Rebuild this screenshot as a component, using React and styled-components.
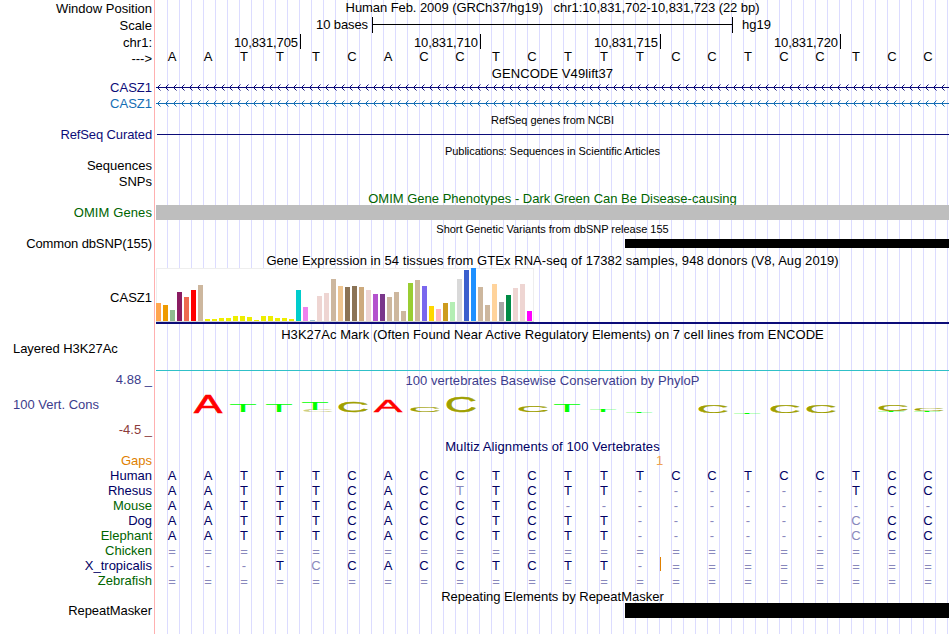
import React from "react";
import styled, { createGlobalStyle, css } from "styled-components";

const NAVY = "#0c0c78";
const GREEN = "#006400";
const PALE = "#8888bc";

const GlobalStyle = createGlobalStyle`
  body {
    margin: 0;
    background: #ffffff;
    color: #000000;
    font-family: "Liberation Sans", Arial, Helvetica, sans-serif;
    font-size: 13px;
    overflow: hidden;
  }
`;

const Browser = styled.div`
  display: flex;
  width: 950px;
  height: 634px;
  overflow: hidden;
`;

const LabelColumn = styled.div`
  display: flex;
  flex-direction: column;
  width: 154px;
  box-sizing: border-box;
  padding: 2px 2px 0 13px;
`;

const Label = styled.div`
  height: 14px;
  line-height: 14px;
  margin-top: ${(props) => props.$gap || 0}px;
  color: ${(props) => props.$color || "#000000"};
  letter-spacing: ${(props) => props.$spacing || 0}px;
  text-align: ${(props) => (props.$left ? "left" : "right")};
  white-space: pre;
`;

const TrackColumn = styled.div`
  display: flex;
  flex-direction: column;
  width: 793px;
  margin-right: 1px;
  margin-left: 1px;
  background: repeating-linear-gradient(
    to right,
    transparent 0 11px,
    #dcdcff 11px 12px
  );
`;

const Divider = styled.div`
  width: 1px;
  background: #ffb0b0;
`;

const Caption = styled.div`
  height: 14px;
  line-height: 16px;
  flex-shrink: 0;
  margin-top: ${(props) => props.$gap || 0}px;
  color: ${(props) => props.$color || "#000000"};
  letter-spacing: ${(props) => props.$spacing || 0}px;
  text-align: center;
  white-space: pre;
  ${(props) =>
    props.$small &&
    css`
      font-size: 11px;
      line-height: 14px;
    `}
`;

const ScaleRow = styled.div`
  display: flex;
  height: 16px;
  line-height: 16px;
  margin-top: 3px;
`;
const ScaleText = styled.div`
  width: 212px;
  margin-right: 4px;
  letter-spacing: -0.1px;
  text-align: right;
`;
const ScaleBar = styled.div`
  display: flex;
  align-items: center;
  box-sizing: border-box;
  width: 361px;
  margin-right: 9px;
  border: solid #000000;
  border-width: 0 1px;
  &::before {
    content: "";
    width: 100%;
    height: 1px;
    margin-bottom: 1px;
    background: #000000;
  }
`;

const RulerRow = styled.div`
  display: flex;
  height: 15px;
  line-height: 17px;
  margin-top: 1px;
`;
const RulerTick = styled.div`
  box-sizing: border-box;
  width: ${(props) => (props.$first ? 145 : 180)}px;
  padding-right: 2px;
  border-right: 1px solid #000000;
  letter-spacing: -0.1px;
  text-align: right;
`;

const BaseRow = styled.div`
  display: flex;
  height: 15px;
  line-height: 15px;
  margin-top: ${(props) => props.$gap || 0}px;
  color: ${(props) => props.$color || "#000000"};
`;
const Base = styled.span`
  flex: 0 0 36px;
  box-sizing: border-box;
  padding-right: 4px;
  text-align: center;
  position: relative;
  ${(props) =>
    props.$pale &&
    css`
      color: ${PALE};
    `}
  ${(props) =>
    props.$unaligned &&
    css`
      line-height: 17px;
    `}
`;
// insertion mark, lies between two bases
const Insertion = styled.i`
  position: absolute;
  left: 36px;
  top: -1px;
  width: 1px;
  height: 14px;
  background: #e08000;
`;

const GapRow = styled.div`
  height: 14px;
  line-height: 14px;
  margin-top: 1px;
  padding-left: 500px;
  color: #f0a050;
`;

const GeneLine = styled.svg`
  display: block;
  width: 793px;
  height: 15px;
  margin-top: ${(props) => props.$gap || 0}px;
`;

const Rule = styled.div`
  height: ${(props) => props.$h || 1}px;
  flex-shrink: 0;
  margin-top: ${(props) => props.$gap || 0}px;
  margin-left: ${(props) => props.$start || 0}px;
  background: ${(props) => props.$color || "#000000"};
`;

const Expression = styled.div`
  display: flex;
  align-items: flex-end;
  gap: 2px;
  box-sizing: border-box;
  width: 378px;
  height: 54px;
  margin-top: 1px;
  background: #ffffff;
  box-shadow: inset 1px 1px #eeeeee, inset -1px 0 #eeeeee;
  border-bottom: 1px solid #d3d3d3;
`;
const Bar = styled.div`
  width: 5px;
  flex-shrink: 0;
`;

const Logo = styled.svg`
  display: block;
  width: 793px;
  height: 50px;
`;

const labels = [
  { text: "Window Position", y: 8 },
  { text: "Scale", y: 25 },
  { text: "chr1:", y: 42 },
  { text: "--->", y: 58 },
  { text: "CASZ1", y: 87, color: NAVY },
  { text: "CASZ1", y: 103, color: "#146eb4" },
  { text: "RefSeq Curated", y: 134, color: NAVY, spacing: -0.12 },
  { text: "Sequences", y: 165 },
  { text: "SNPs", y: 181 },
  { text: "OMIM Genes", y: 212, color: GREEN, spacing: 0.1 },
  { text: "Common dbSNP(155)", y: 243, spacing: -0.12 },
  { text: "CASZ1", y: 297 },
  { text: "Layered H3K27Ac", y: 348, left: true, spacing: -0.05 },
  { text: "4.88 _", y: 379, color: "#3c3c8c" },
  { text: "100 Vert. Cons", y: 404, color: "#3c3c8c", left: true },
  { text: "-4.5 _", y: 429, color: "#8c3c3c" },
  { text: "Gaps", y: 460, color: "#e08000" },
  { text: "Human", y: 475, color: "#000064" },
  { text: "Rhesus", y: 490, color: "#000064" },
  { text: "Mouse", y: 505, color: GREEN },
  { text: "Dog", y: 520, color: "#000064" },
  { text: "Elephant", y: 535, color: GREEN },
  { text: "Chicken", y: 550, color: GREEN },
  { text: "X_tropicalis", y: 565, color: "#000064" },
  { text: "Zebrafish", y: 580, color: GREEN },
  { text: "RepeatMasker", y: 610, spacing: -0.06 },
];

// lower case = differs from human, drawn pale
const alignments = [
  "AATTTCACCTCTTTCCTCCTCC",
  "AATTTCACtTCTT------TCC",
  "AATTTCACCTC-----------",
  "AATTTCACCTCTT------cCC",
  "AATTTCACCTCTT------cCC",
  "======================",
  "---TcCACCTCTT-========",
  "======================",
];

const tissues = [
  [18, "#FFA54F"], [16, "#EE9A00"], [11, "#8FBC8F"], [29, "#8B1C62"],
  [24, "#EE6A50"], [31, "#FF0000"], [36, "#CDB79E"], [2, "#EEEE00"],
  [2, "#EEEE00"], [3, "#EEEE00"], [3, "#EEEE00"], [5, "#EEEE00"],
  [5, "#EEEE00"], [4, "#EEEE00"], [1, "#EEEE00"], [5, "#EEEE00"],
  [5, "#EEEE00"], [3, "#EEEE00"], [3, "#EEEE00"], [2, "#EEEE00"],
  [31, "#00CDCD"], [14, "#EE82EE"], [1, "#9AC0CD"], [25, "#EED5D2"],
  [28, "#EED5D2"], [42, "#CDB79E"], [35, "#EEC591"], [34, "#8B7355"],
  [35, "#8B7355"], [34, "#CDAA7D"], [31, "#EED5D2"], [27, "#B452CD"],
  [27, "#7A378B"], [24, "#CDB79E"], [29, "#CDB79E"], [10, "#CDB79E"],
  [38, "#9ACD32"], [41, "#CDB79E"], [35, "#7A67EE"], [15, "#FFD700"],
  [12, "#FFB6C1"], [18, "#CD9B1D"], [19, "#B4EEB4"], [42, "#D9D9D9"],
  [51, "#3A5FCD"], [53, "#1E90FF"], [34, "#CDB79E"], [16, "#CDB79E"],
  [37, "#FFD39B"], [19, "#A6A6A6"], [26, "#008B45"], [33, "#EED5D2"],
  [37, "#EED5D2"], [10, "#FF00FF"],
];

// ink box of each letter in em: left, right, below the baseline, above it
const glyphs = {
  A: { box: [0.002, 0.665, 0, 0.688], color: "#ff0000", width: 28, stroke: 2.5 },
  T: { box: [0.022, 0.588, 0, 0.688], color: "#00ff00", width: 26, stroke: 0 },
  C: { box: [0.05, 0.677, 0.01, 0.698], color: "#a0a000", width: 28, stroke: 2 },
};

// letter, left, top, bottom, opacity
const logo = [
  ["A", 38, 8, 26],
  ["T", 74, 17, 25],
  ["T", 110, 17, 25],
  ["C", 148, 23, 25, 0.5],
  ["T", 146, 15, 23],
  ["C", 183, 14, 25],
  ["A", 218, 14, 25],
  ["C", 255, 20, 25],
  ["C", 291, 10, 25],
  ["C", 363, 18, 25],
  ["T", 398, 18, 25],
  ["T", 434, 23, 25],
  ["T", 470, 25, 26],
  ["C", 543, 18, 26],
  ["T", 578, 26, 27],
  ["C", 615, 18, 26],
  ["C", 651, 18, 26],
  ["T", 722, 24, 25],
  ["C", 723, 18, 24],
  ["T", 758, 24, 25],
  ["C", 759, 21, 24],
];

const LogoLetter = ({ letter, x, top, bottom, opacity }) => {
  const { box, color, width, stroke } = glyphs[letter];
  const sx = width / (box[1] - box[0]) / 100;
  const sy = (bottom - top) / (box[2] + box[3]) / 100;
  const dx = x - box[0] * 100 * sx;
  const dy = bottom - box[2] * 100 * sy;
  return (
    <text
      fontSize="100"
      fill={color}
      stroke={stroke ? color : "none"}
      strokeWidth={stroke}
      opacity={opacity}
      transform={`matrix(${sx} 0 0 ${sy} ${dx} ${dy})`}
    >
      {letter}
    </text>
  );
};

const Gene = ({ id, color, gap }) => (
  <GeneLine $gap={gap}>
    <defs>
      <pattern id={id} x="1" y="0" width="8" height="15" patternUnits="userSpaceOnUse">
        <path d="M3.5 4.5L0.5 7.5L3.5 10.5" fill="none" stroke={color} strokeWidth="1" />
      </pattern>
    </defs>
    <rect x="1" width="792" height="15" fill={`url(#${id})`} />
    <rect y="7" width="793" height="1" fill={color} />
  </GeneLine>
);

const Sequence = ({ bases, gap, color, insertAt }) => (
  <BaseRow $gap={gap} $color={color}>
    {bases.split("").map((b, i) => (
      <Base key={i} $pale={/[a-z=-]/.test(b)} $unaligned={b === "="}>
        {b.toUpperCase()}
        {insertAt === i && <Insertion />}
      </Base>
    ))}
  </BaseRow>
);

const App = () => {
  return (
    <>
      <GlobalStyle />
      <Browser>
        <LabelColumn>
          {labels.map((l, i) => (
            <Label
              key={i}
              $gap={i ? l.y - labels[i - 1].y - 14 : 0}
              $color={l.color}
              $left={l.left}
              $spacing={l.spacing}
            >
              {l.text}
            </Label>
          ))}
        </LabelColumn>
        <Divider />
        <TrackColumn>
          <Caption $spacing={-0.07}>
            Human Feb. 2009 (GRCh37/hg19)   chr1:10,831,702-10,831,723 (22 bp)
          </Caption>
          <ScaleRow>
            <ScaleText>10 bases</ScaleText>
            <ScaleBar />
            <div>hg19</div>
          </ScaleRow>
          <RulerRow>
            <RulerTick $first>10,831,705</RulerTick>
            <RulerTick>10,831,710</RulerTick>
            <RulerTick>10,831,715</RulerTick>
            <RulerTick>10,831,720</RulerTick>
          </RulerRow>
          <Sequence bases={alignments[0]} />
          <Caption $gap={2} $spacing={0.08}>GENCODE V49lift37</Caption>
          <Gene id="arrows-a" color={NAVY} />
          <Gene id="arrows-b" color="#146eb4" gap={1} />
          <Caption $small $gap={2} $spacing={-0.06}>RefSeq genes from NCBI</Caption>
          <Rule $gap={7} $start={1} $color={NAVY} />
          <Caption $small $gap={9} $spacing={-0.06}>
            Publications: Sequences in Scientific Articles
          </Caption>
          <Caption $gap={33} $color={GREEN}>
            OMIM Gene Phenotypes - Dark Green Can Be Disease-causing
          </Caption>
          <Rule $h={15} $color="#bebebe" />
          <Caption $small $gap={2} $spacing={-0.02}>
            Short Genetic Variants from dbSNP release 155
          </Caption>
          <Rule $gap={3} $h={9} $start={469} />
          <Caption $gap={5} $spacing={0.055}>
            Gene Expression in 54 tissues from GTEx RNA-seq of 17382 samples, 948 donors (V8, Aug 2019)
          </Caption>
          <Expression>
            {tissues.map(([h, color], i) => (
              <Bar key={i} style={{ height: h, background: color }} />
            ))}
          </Expression>
          <Rule $h={2} $color={NAVY} />
          <Caption $gap={3} $spacing={0.06}>
            H3K27Ac Mark (Often Found Near Active Regulatory Elements) on 7 cell lines from ENCODE
          </Caption>
          <Rule $gap={29} $color="#30c0c8" />
          <Caption $gap={2} $color="#3c3c8c" $spacing={0.04}>
            100 vertebrates Basewise Conservation by PhyloP
          </Caption>
          <Logo>
            {logo.map(([letter, x, top, bottom, opacity], i) => (
              <LogoLetter
                key={i}
                letter={letter}
                x={x}
                top={top}
                bottom={bottom}
                opacity={opacity}
              />
            ))}
          </Logo>
          <Caption $gap={2} $color="#000064" $spacing={0.1}>
            Multiz Alignments of 100 Vertebrates
          </Caption>
          <GapRow>1</GapRow>
          {alignments.map((bases, i) => (
            <Sequence
              key={i}
              bases={bases}
              color="#000064"
              insertAt={i === 6 ? 13 : undefined}
            />
          ))}
          <Caption $gap={1}>Repeating Elements by RepeatMasker</Caption>
          <Rule $h={15} $start={469} />
        </TrackColumn>
      </Browser>
    </>
  );
};

export default App;
